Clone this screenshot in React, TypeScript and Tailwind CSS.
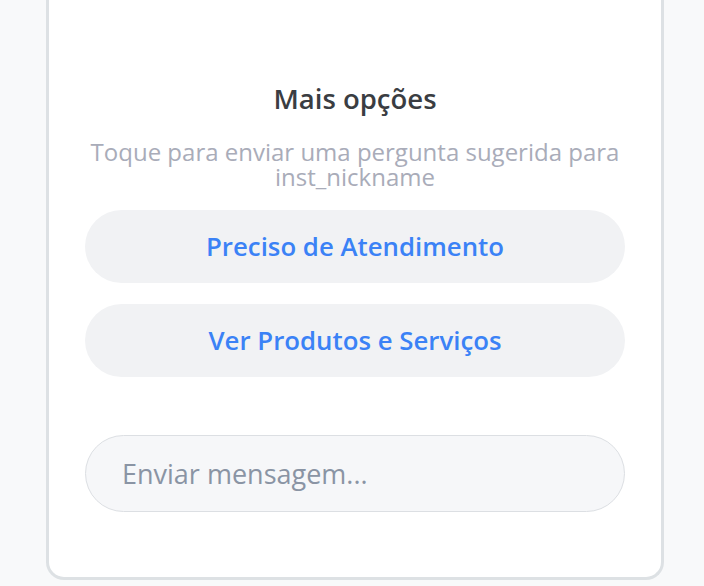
export default function App() {
  return (
    <div className="min-h-[586px] bg-[#f8f9fa] px-[46px] font-['Open_Sans',sans-serif]">
      <div className="flex h-[580px] w-[618px] flex-col rounded-b-[18px] border-[3px] border-t-0 border-[#dde1e4] bg-white px-[36px] pt-[82px]">
        <h2 className="text-center text-[27.5px] leading-[34px] font-semibold text-[#3a3d42]">Mais opções</h2>
        <p className="mt-[23px] text-center text-[24px] leading-[25px] text-[#a9acb9]">
          Toque para enviar uma pergunta sugerida para inst_nickname
        </p>
        <div className="mt-[21px] flex flex-col gap-[21px]">
          <button className="h-[73px] rounded-full bg-[#f1f2f4] text-[25.8px] font-semibold text-[#3b82f6]">
            Preciso de Atendimento
          </button>
          <button className="h-[73px] rounded-full bg-[#f1f2f4] text-[25.8px] font-semibold text-[#3b82f6]">
            Ver Produtos e Serviços
          </button>
        </div>
        <input
          placeholder="Enviar mensagem..."
          className="mt-[58px] h-[77px] rounded-full border border-[#dcdfe3] bg-[#f6f7f9] px-[36px] text-[27px] text-[#3a3d42] outline-none placeholder:text-[#8a94a4]"
        />
      </div>
    </div>
  )
}
